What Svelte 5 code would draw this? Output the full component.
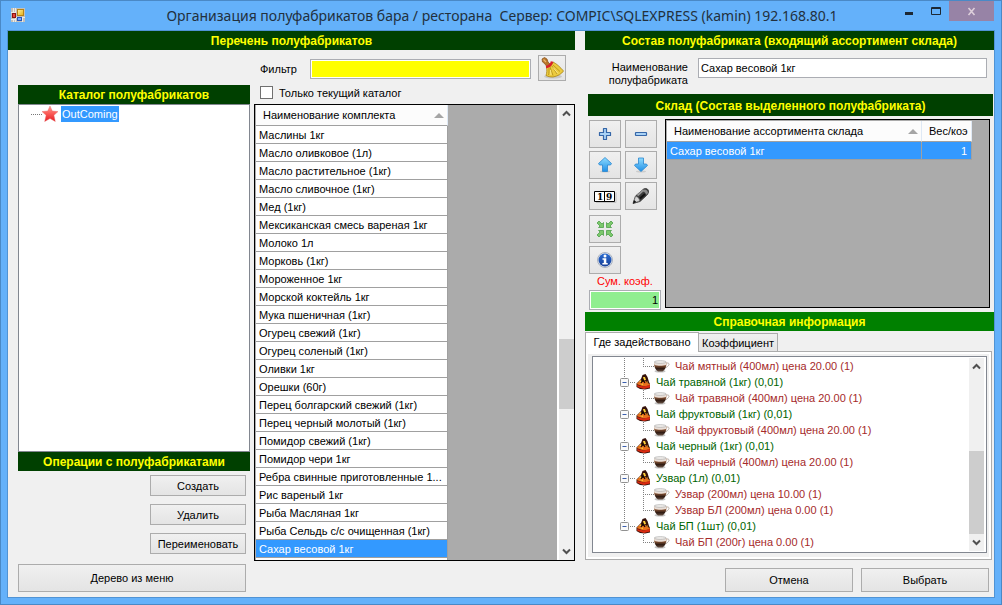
<script>
  const items = [
    'Маслины 1кг', 'Масло оливковое (1л)', 'Масло растительное (1кг)', 'Масло сливочное (1кг)', 'Мед (1кг)',
    'Мексиканская смесь вареная 1кг', 'Молоко 1л', 'Морковь (1кг)', 'Мороженное 1кг', 'Морской коктейль 1кг',
    'Мука пшеничная (1кг)', 'Огурец свежий (1кг)', 'Огурец соленый (1кг)', 'Оливки 1кг', 'Орешки (60г)',
    'Перец болгарский свежий (1кг)', 'Перец черный молотый (1кг)', 'Помидор свежий (1кг)', 'Помидор чери 1кг',
    'Ребра свинные приготовленные 1...', 'Рис вареный 1кг', 'Рыба Масляная 1кг', 'Рыба Сельдь с/с очищенная (1кг)',
    'Сахар весовой 1кг'
  ];
  const nodes = [
    { text: 'Чай мятный (400мл) цена 20.00 (1)', child: true, end: true },
    { text: 'Чай травяной (1кг) (0,01)' },
    { text: 'Чай травяной (400мл) цена 20.00 (1)', child: true, end: true },
    { text: 'Чай фруктовый (1кг) (0,01)' },
    { text: 'Чай фруктовый (400мл) цена 20.00 (1)', child: true, end: true },
    { text: 'Чай черный (1кг) (0,01)' },
    { text: 'Чай черный (400мл) цена 20.00 (1)', child: true, end: true },
    { text: 'Узвар (1л) (0,01)' },
    { text: 'Узвар (200мл) цена 10.00 (1)', child: true },
    { text: 'Узвар БЛ (200мл) цена 0.00 (1)', child: true, end: true },
    { text: 'Чай БП (1шт) (0,01)', rootEnd: true },
    { text: 'Чай БП (200г) цена 0.00 (1)', child: true, end: true, noRoot: true }
  ];
  let selected = $state(23);
  let onlyCurrent = $state(false);
  let filter = $state('');
  let name = $state('Сахар весовой 1кг');
  let total = $state('1');
</script>

{#snippet scroll(before, thumb, after)}
  <div class="scroll">
    <button aria-label="Вверх"><svg width="9" height="7" viewBox="0 0 9 7"><path d="M1 5.5 4.5 2 8 5.5" fill="none" stroke="#505050" stroke-width="2" /></svg></button>
    <div class="track">
      <i style="flex-grow:{before}"></i><b style="flex-grow:{thumb}"></b><i style="flex-grow:{after}"></i>
    </div>
    <button aria-label="Вниз"><svg width="9" height="7" viewBox="0 0 9 7"><path d="M1 1.5 4.5 5 8 1.5" fill="none" stroke="#505050" stroke-width="2" /></svg></button>
  </div>
{/snippet}

<svg class="defs" width="0" height="0" aria-hidden="true">
  <defs>
    <linearGradient id="blue" x2="0" y2="1"><stop stop-color="#8fdcff" /><stop offset="1" stop-color="#1f8fe6" /></linearGradient>
    <linearGradient id="info" x2="0" y2="1"><stop stop-color="#2a6bd0" /><stop offset="1" stop-color="#173f97" /></linearGradient>
    <linearGradient id="star" x2="0" y2="1"><stop stop-color="#ff9a92" /><stop offset=".5" stop-color="#fa5a55" /><stop offset="1" stop-color="#e31b23" /></linearGradient>
    <linearGradient id="gold" x2="1" y2="1"><stop stop-color="#fff3a0" /><stop offset="1" stop-color="#e5ae12" /></linearGradient>
    <linearGradient id="coffee" x2="0" y2="1"><stop stop-color="#c9a184" /><stop offset=".35" stop-color="#8a5636" /><stop offset=".7" stop-color="#2e1a12" /><stop offset="1" stop-color="#6b5548" /></linearGradient>
  </defs>
</svg>

<div class="window">
  <header class="titlebar">
    <svg class="app" width="14" height="14" viewBox="0 0 14 14">
      <rect width="14" height="14" fill="#c3c0ba" />
      <path d="M0 4.5h5M0 11.5h5M4.5 0v14M5 9.5h9M11.5 9v5M2.5 0v4M2.5 11v3" stroke="#eceae4" />
      <rect x="6.5" y="1.5" width="6" height="6" fill="url(#gold)" stroke="#b98412" />
      <rect x="1.5" y="5.5" width="3" height="4" fill="#e4463b" stroke="#8c1512" />
      <rect x="6.5" y="9.5" width="4" height="3" fill="#73a8ff" stroke="#2856b8" />
    </svg>
    <h1>Организация полуфабрикатов бара / ресторана&nbsp; Сервер: COMPIC\SQLEXPRESS (kamin) 192.168.80.1</h1>
    <div class="winbtns">
      <button aria-label="Свернуть"><svg width="10" height="10"><path d="M1 7.500h8" stroke="#1c2833" stroke-width="3" /></svg></button>
      <button aria-label="Развернуть"><svg width="10" height="10"><path d="M.5 1.500h9v7h-9zM0 2.500h10" fill="none" stroke="#1c2833" /></svg></button>
      <button class="close" aria-label="Закрыть"><svg width="9" height="9"><path d="m1.500 1 6 7m0-7-6 7" stroke="#ddcfdb" stroke-width="1.600" /></svg></button>
    </div>
  </header>

  <main>
    <section class="left">
      <h2>Перечень полуфабрикатов</h2>
      <div class="cols">
        <div class="catalog">
          <h2>Каталог полуфабрикатов</h2>
          <div class="cattree">
            <svg width="30" height="16" viewBox="0 0 30 16">
              <path d="M0 8.500h12" stroke="#777" stroke-dasharray="1 1" />
              <path d="m19 0 2.300 5 5.700.6-4.100 3.700 1.400 6.200-5.300-3-5.300 3 1.400-6.200L11 5.600l5.700-.6z" fill="url(#star)" stroke="#e8635f" stroke-width=".4" />
            </svg>
            <span>OutComing</span>
          </div>
          <h2>Операции с полуфабрикатами</h2>
          <div class="ops">
            <button class="btn">Создать</button>
            <button class="btn">Удалить</button>
            <button class="btn">Переименовать</button>
          </div>
          <button class="btn menu">Дерево из меню</button>
        </div>

        <div class="listcol">
          <div class="filter">
            <label for="filter">Фильтр</label>
            <input id="filter" bind:value={filter} />
            <button class="btn icon broom" aria-label="Очистить фильтр">
              <svg width="24" height="24" viewBox="0 0 24 24">
                <ellipse cx="13" cy="20.500" rx="9" ry="2" fill="#c8c8c8" />
                <path d="M2 3 4.500 1.500 7 3l1 3 2 2-3 2.500L4 7 2.500 6z" fill="#b8752a" stroke="#85501c" stroke-width=".7" />
                <path d="M3.500 3.500 6 6" stroke="#edb96c" stroke-width="1.300" />
                <path d="M6.500 11c3.500-.5 5.500-2 6.500-5 4 2 7 5 10.500 9-2 3-5.500 5-10.500 6-3 0-5-.5-7-1.500 1-3 1-5.500.5-8.500z" fill="#eccb3e" stroke="#a98412" stroke-width=".8" />
                <path d="M9 12c0 3 0 5-.5 7M10 11l3 8.500M12 10l5 8M13 9l7 6.500" fill="none" stroke="#b08d18" stroke-width=".8" />
                <path d="M10.500 14l.5 5M13 11.500l5 6" stroke="#fff09a" stroke-width=".8" />
                <path d="M6 11C9 10.500 11.500 8.500 12 5.500" fill="none" stroke="#d8202a" stroke-width="2.500" />
              </svg>
            </button>
          </div>
          <label class="only"><input type="checkbox" bind:checked={onlyCurrent} /><span>Только текущий каталог</span></label>
          <div class="grid list">
            <div class="clip">
              <table>
                <thead><tr><th><div class="th">Наименование комплекта<i class="sort"></i></div></th></tr></thead>
                <tbody>
                  {#each items as item, i}
                    <tr class:sel={i === selected} onclick={() => (selected = i)}><td>{item}</td></tr>
                  {/each}
                  <tr><td></td></tr>
                </tbody>
              </table>
            </div>
            {@render scroll(216, 70, 134)}
          </div>
        </div>
      </div>
    </section>

    <section class="right">
      <h2>Состав полуфабриката (входящий ассортимент склада)</h2>
      <div class="name">
        <label for="name">Наименование полуфабриката</label>
        <input id="name" bind:value={name} />
      </div>
      <h2 class="stock">Склад (Состав выделенного полуфабриката)</h2>
      <div class="compose">
        <div class="side">
          <div class="tools">
            <button class="btn icon" aria-label="Добавить"><svg width="24" height="24" viewBox="0 0 24 24"><path d="M10.500 6.500h3v4h4v3h-4v4h-3v-4h-4v-3h4z" fill="#a9d2f5" stroke="#3566a8" stroke-width="1.200" stroke-linejoin="round" /></svg></button>
            <button class="btn icon" aria-label="Убрать"><svg width="24" height="24" viewBox="0 0 24 24"><rect x="6.500" y="10.500" width="11" height="3" rx=".5" fill="#a9d2f5" stroke="#3566a8" stroke-width="1.200" /></svg></button>
            <button class="btn icon" aria-label="Выше"><svg width="24" height="24" viewBox="0 0 24 24"><ellipse cx="12" cy="18.500" rx="5" ry="1" fill="#ccc" /><path d="m12 4.500 6.500 6-1 1.500h-3v6.500h-5V12h-3l-1-1.500z" fill="url(#blue)" stroke="#2a86cf" stroke-width=".8" /></svg></button>
            <button class="btn icon" aria-label="Ниже"><svg width="24" height="24" viewBox="0 0 24 24"><ellipse cx="12" cy="18.500" rx="5" ry="1" fill="#ccc" /><path d="m12 18.500-6.500-6 1-1.500h3V5h5v6h3l1 1.500z" fill="url(#blue)" stroke="#2a86cf" stroke-width=".8" /></svg></button>
            <button class="btn icon" aria-label="Количество"><svg width="24" height="24" viewBox="0 0 24 24"><path d="M3 18.500h20v-10" fill="none" stroke="#c4c4c4" /><path d="M1.500 7.500h20v10h-20zM11.500 7.500v10" fill="#fff" stroke="#000" /><text x="4" y="16" class="num">1</text><text x="13" y="16" class="num">9</text></svg></button>
            <button class="btn icon" aria-label="Изменить"><svg width="24" height="24" viewBox="0 0 24 24"><path d="M4 19.500 6.500 12 14 5.500c2-2 6-1 5.500 2.500-.2 1.500-1 2.500-2 3.500L11 17.500z" fill="#3b3b3b" stroke="#333" stroke-width=".8" /><path d="m8.500 11.500 6-5.500" stroke="#999" stroke-width="1.800" /><path d="M14 6c2-1.500 5 0 5 3l-2 2c0-2.500-2-4-4.500-3.500z" fill="#8c8c8c" /><path d="m11 14.500 5-4.500" stroke="#111" stroke-width="2" /><path d="m4.500 19 2-6.500c2 0 4 2 4 4.500z" fill="#d6d6d6" stroke="#777" stroke-width=".6" /><path d="m4 19.500 1-3.200c1 .3 1.800 1 2.200 2z" fill="#111" /></svg></button>
          </div>
          <div class="tools single">
            <button class="btn icon" aria-label="Свести"><svg width="24" height="24" viewBox="0 0 24 24"><g fill="#7cc86c" stroke="#4ea04a" stroke-width=".8"><path id="arr" d="M4 6 6 4l3 3 1.500-1.500v5h-5L7 9z" /><use href="#arr" transform="matrix(-1 0 0 1 24 0)" /><use href="#arr" transform="matrix(1 0 0 -1 0 24)" /><use href="#arr" transform="matrix(-1 0 0 -1 24 24)" /></g></svg></button>
            <button class="btn icon" aria-label="Сведения"><svg width="24" height="24" viewBox="0 0 24 24"><circle cx="12" cy="12" r="7.500" fill="#e3e8f0" stroke="#9aa3b3" stroke-width=".8" /><circle cx="12" cy="12" r="6.500" fill="url(#info)" /><circle cx="12" cy="8" r="1.500" fill="#fff" /><path d="M9.500 10.300h3.800V15h1.400v1.500H9.400V15h1.400v-3.200H9.500z" fill="#fff" /></svg></button>
          </div>
          <label for="total">Сум. коэф.</label>
          <input id="total" bind:value={total} />
        </div>
        <div class="grid stockgrid">
          <table>
            <thead><tr><th><div class="th">Наименование ассортимента склада<i class="sort"></i></div></th><th class="w"><div class="th">Вес/коэ</div></th></tr></thead>
            <tbody><tr class="sel"><td>Сахар весовой 1кг</td><td class="w">1</td></tr></tbody>
          </table>
        </div>
      </div>
      <h2 class="ref">Справочная информация</h2>
      <div class="tabs" role="tablist">
        <button role="tab" aria-selected="true" class="on">Где задействовано</button>
        <button role="tab" aria-selected="false">Коэффициент</button>
      </div>
      <div class="panel">
        <div class="tree">
          <ul>
            {#each nodes as n}
              <li class:child={n.child}>
                {#if n.child}
                  <svg width="80" height="16" viewBox="0 0 80 16">
                    <g stroke="#808080" stroke-dasharray="1 1">
                      {#if !n.noRoot}<path d="M31.500 0v16" />{/if}
                      <path d={n.end ? 'M50.500 0v8' : 'M50.500 0v16'} /><path d="M50 8.500h11" />
                    </g>
                    <ellipse cx="67" cy="13.300" rx="5.500" ry="1.200" fill="#c4c4c4" />
                    <path d="M72 5.500c2-1 4.500-.5 4 1-.4 1.500-2.500 3-4.500 3.500" fill="none" stroke="#b5aaa2" />
                    <path d="M61 4h12.500c.3 4-1.500 8-4 9.500h-4.500C62.500 12 60.700 8 61 4z" fill="url(#coffee)" />
                    <path d="M61 4c0 1 .2 2 .5 3 3 1 8.500 1 11.500 0 .3-1 .5-2 .5-3z" fill="#e9dfd8" />
                    <ellipse cx="67.200" cy="4" rx="6" ry="1.300" fill="#f4f1ee" stroke="#aaa" stroke-width=".7" />
                  </svg>
                {:else}
                  <svg width="61" height="16" viewBox="0 0 61 16">
                    <g stroke="#808080" stroke-dasharray="1 1">
                      <path d={n.rootEnd ? 'M31.500 0v4' : 'M31.500 0v16'} /><path d="M37 8.500h6" /><path d="M50.500 14v2" />
                    </g>
                    <rect x="27.500" y="4.500" width="8" height="8" rx="1" fill="#fafafa" stroke="#919191" />
                    <path d="M29.500 8.500h4" stroke="#3b5fae" />
                    <path d="M43.500 9.500 48 5l1.500-4 3-1 2 3 1.500 5 1 2v4.500L52 15.500l-5-.5-3.500-2z" fill="#35110a" />
                    <path d="m43.500 10 4-4 2 2 3-1 2 2 2.500 1-.5 1.500-6 1z" fill="#e8711c" />
                    <path d="m44 11 6.500 1.500L57 11v2.500L51 15l-6.500-2z" fill="#d92a10" />
                    <path d="m46 8 2-2 .5 2zM50 3l2 0 1 3-2 .5zM53.500 7l1.500 1-.5 1zM47 10l3-.5v1.500z" fill="#ffd23a" />
                    <path d="m48 9 2-3 2 3" fill="none" stroke="#160805" stroke-width="1.300" />
                  </svg>
                {/if}
                <span>{n.text}</span>
              </li>
            {/each}
          </ul>
          {@render scroll(76, 83, 0)}
        </div>
      </div>
      <footer>
        <button class="btn">Отмена</button>
        <button class="btn">Выбрать</button>
      </footer>
    </section>
  </main>
</div>

<style>
  :global(body) { margin: 0; }
  .window, .window * { box-sizing: border-box; }
  .window {
    min-height: 100vh; display: flex; flex-direction: column; padding: 0 7px 7px;
    background: #64b1fa; border: 1px solid #4a89c6;
    font: 11px/13px "Liberation Sans", Arial, sans-serif; color: #000;
  }
  .defs { display: block; position: absolute; }
  svg { display: block; flex: none; }
  button, input { font: inherit; color: inherit; margin: 0; border-radius: 0; }
  .titlebar { display: flex; height: 30px; padding-left: 3px; flex: none; }
  .app { margin-top: 7px; }
  h1 { flex: 1; margin: 0; text-align: center; font: 14px/30px "Noto Sans", "Open Sans", sans-serif; color: #22303d; white-space: nowrap; min-width: 0; padding-left: 84px; }
  .winbtns { display: flex; align-items: flex-start; height: 20px; }
  .winbtns button { width: 27px; height: 20px; padding: 0; border: 0; background: none; display: grid; place-items: center; }
  .winbtns .close { width: 45px; background: #9783a6; }
  main { flex: 1; display: grid; grid-template-columns: minmax(0, 567fr) minmax(0, 409fr); gap: 10px; background: #f0f0f0; outline: 1px solid #5093d4; }
  section { display: flex; flex-direction: column; }
  h2 { margin: 0; height: 19px; flex: none; background: #004000; color: #ff0; font: bold 12px/21px "Liberation Sans", Arial, sans-serif; text-align: center; white-space: nowrap; }
  .cols { flex: 1; display: flex; gap: 4px; padding-left: 10px; }
  .catalog { width: 232px; padding: 35px 0 5px; display: flex; flex-direction: column; }
  .cattree { flex: 1; background: #fff; border: 1px solid #828790; display: flex; align-items: flex-start; padding: 1px 0 0 12px; }
  .cattree span { background: #39f; color: #fff; padding: 2px 1px 1px; height: 16px; }
  .ops { display: flex; flex-direction: column; align-items: flex-end; gap: 8px; padding: 4px 4px 10px 0; }
  .ops .btn { width: 96px; height: 21px; }
  .menu { height: 28px; margin-right: 4px; }
  .btn { border: 1px solid #acacac; background: linear-gradient(#f0f0f0, #e4e4e4); padding: 1px 0 0; display: grid; place-items: center; }
  .icon { padding: 0; }
  .listcol { flex: 1; min-width: 0; display: flex; flex-direction: column; padding: 4px 0 36px; }
  .filter { display: flex; align-items: center; height: 27px; padding: 0 9px 0 6px; }
  .filter label { width: 50px; padding-top: 3px; }
  .filter input { flex: 1; min-width: 0; height: 20px; margin: 3px 7px 0 0; background: #ff0; border: 1px solid #abadb3; box-shadow: inset 0 0 0 1px #fff; padding: 0 3px; }
  .broom { width: 28px; height: 26px; }
  .only { display: flex; align-items: center; gap: 6px; padding-left: 6px; height: 23px; }
  .only span { padding-top: 2px; }
  .only input { appearance: none; width: 13px; height: 13px; background: #fff; border: 1px solid #707070; }
  .only input:checked { background: #39f; }
  .grid { border: 1px solid #000; background: #ababab; display: flex; min-width: 0; }
  .list { flex: 1 1 0; min-height: 200px; }
  .clip { flex: 1; min-width: 0; height: 0; min-height: 100%; overflow: hidden; padding-left: 1px; }
  table { border-collapse: separate; border-spacing: 0; table-layout: fixed; }
  .clip table { width: 192px; }
  th { font-weight: normal; text-align: left; padding: 1px 0 0; background: #fcfcfc; border-right: 1px solid #dfe9f5; border-bottom: 1px solid #a0a0a0; height: 21px; }
  .th { display: flex; align-items: center; justify-content: space-between; padding: 0 3px 0 7px; white-space: nowrap; }
  .sort { border: 5px solid transparent; border-top: 0; border-bottom-color: #a5a5a5; }
  td { height: 18px; padding: 1px 0 0 3px; background: #fff; border-right: 1px solid #a0a0a0; border-bottom: 1px solid #a0a0a0; white-space: nowrap; overflow: hidden; }
  .sel td { background: #39f; color: #fff; }
  .scroll { width: 17px; display: flex; flex-direction: column; background: #f0f0f0; border-left: 2px solid #fff; flex: none; }
  .scroll button { height: 17px; border: 0; padding: 0; background: none; display: grid; place-items: center; }
  .track { flex: 1; display: flex; flex-direction: column; }
  .track i, .track b { flex-basis: 0; }
  .track b { background: #cdcdcd; }

  .name { display: flex; justify-content: flex-end; gap: 10px; padding: 8px 7px 0 0; height: 44px; }
  .name label { width: 90px; text-align: right; padding-top: 3px; }
  .name input { flex: 0 1 289px; min-width: 0; height: 20px; border: 1px solid #abadb3; padding: 0 2px; background: #fff; }
  .stock { height: 22px; line-height: 24px; margin: 0 1px 0 3px; }
  .compose { display: flex; gap: 4px; padding: 3px 4px 2px; }
  .side { width: 72px; display: flex; flex-direction: column; padding-top: 1px; }
  .tools { display: grid; grid-template-columns: 32px 32px; gap: 3px 4px; margin-bottom: 5px; }
  .single { grid-template-columns: 32px; margin-bottom: 1px; }
  .tools .btn { height: 28px; }
  .num { font: bold 9px "DejaVu Serif", serif; }
  .side label { color: #f00; height: 15px; padding-left: 8px; }
  .side input { width: 72px; height: 20px; border: 1px solid #abadb3; box-shadow: inset 0 0 0 1px #fff; background: #90ee90; text-align: right; padding: 0 2px; }
  .stockgrid { flex: 1; padding: 1px 17px 0 1px; align-items: flex-start; margin-bottom: 2px; }
  .stockgrid table { width: 100%; }
  .w { width: 50px; }
  td.w { text-align: right; padding-right: 4px; }
  .ref { background: #008000; }
  .tabs { display: flex; align-items: flex-end; height: 20px; padding-top: 1px; }
  .tabs button { border: 1px solid #acacac; border-left: 0; border-bottom: 0; background: linear-gradient(#f0f0f0, #e5e5e5); height: 18px; width: 79px; padding: 1px 0 0; white-space: nowrap; }
  .tabs .on { background: #fff; width: 114px; height: 20px; margin-bottom: -1px; border-left: 1px solid #acacac; position: relative; padding: 0 0 1px; }
  .panel { flex: 1; display: flex; border: 1px solid #acacac; margin-right: 2px; background: #f0f0f0; box-shadow: inset 0 0 0 2px #fff; padding: 4px 4px 6px 6px; }
  .tree { flex: 1; min-width: 0; display: flex; border: 1px solid #828790; background: #fff; padding: 1px 2px 1px 0; }
  ul { flex: 1; min-width: 0; overflow: hidden; list-style: none; margin: 0; padding: 0; }
  li { display: flex; height: 16px; line-height: 17px; white-space: nowrap; color: #006400; }
  li span { padding-left: 2px; }
  .child { color: #a52a2a; }
  footer { display: flex; justify-content: flex-end; gap: 8px; padding: 8px 5px 5px 0; }
  footer .btn { width: 128px; height: 24px; }
</style>
